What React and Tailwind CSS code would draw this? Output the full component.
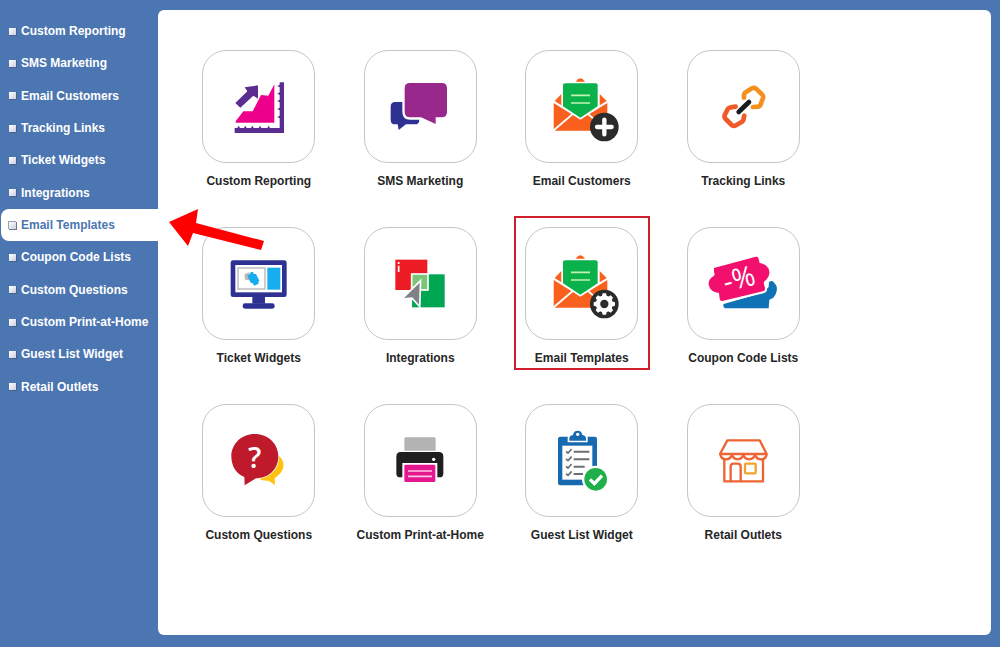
import clsx from "clsx";

function Icon({ box, children }) {
  return (
    <svg viewBox={box} className="h-full w-full" aria-hidden="true">
      {children}
    </svg>
  );
}

function ReportingIcon() {
  return (
    <Icon box="25 18 333 333">
      <path d="M123 229 L146 199 L174 199 L199 150 L221 152 L239 118 V233 H123 Z" fill="#ec008c" />
      <path d="M120 249 H128 l4 -7 l4 7 H148 l4 -7 l4 7 H169 l4 -7 l4 7 H192 l4 -7 l4 7 H218 l4 -7 l4 7 H255 V220 l-7 -4 l7 -4 V196 l-7 -4 l7 -4 V172 l-7 -4 l7 -4 V150 l-7 -4 l7 -4 V127 l-7 -4 l7 -4 V112 H268 V264 H120 Z" fill="#5c2d91" />
      <path d="M122 174 L158 139 L150 127 L190 121 L190 161 L176 152 L137 188 Z" fill="#5c2d91" />
    </Icon>
  );
}

function SmsIcon() {
  return (
    <Icon box="25 18 333 333">
      <path d="M116 171 H174 Q188 171 188 185 V224 Q188 238 174 238 H148 L126 255 L123 238 H116 Q102 238 102 224 V185 Q102 171 116 171 Z" fill="#2e3192" />
      <path d="M160 114 H255 Q271 114 271 130 V201 Q271 217 255 217 H237 V237 L193 217 H160 Q144 217 144 201 V130 Q144 114 160 114 Z" fill="#99288d" stroke="#fff" strokeWidth="14" paintOrder="stroke" strokeLinejoin="round" />
    </Icon>
  );
}

function EnvelopeIcon({ children }) {
  return (
    <Icon box="25 18 333 333">
      <g fill="#f95f1d">
        <path d="M174 110 Q188 90 202 110 Z" />
        <path d="M131 147 V181 L111 168 Z" />
        <path d="M246 147 V181 L267 168 Z" />
        <path d="M108 174 L161 207 L108 252 Z" />
        <path d="M269 174 L215 207 L269 252 Z" />
        <path d="M111 257 L166 210 L188 224 L210 210 L266 257 Z" />
      </g>
      <path d="M143 115 H234 Q240 115 240 121 V184 L188 218 L136 184 V121 Q136 115 143 115 Z" fill="#0bb14b" />
      <path d="M160 151 H217 M160 174 H217" stroke="#c5f2b0" strokeWidth="5" />
      <circle cx="260" cy="246" r="43" fill="#2b2b2b" />
      {children}
    </Icon>
  );
}

function EmailCustomersIcon() {
  return (
    <EnvelopeIcon>
      <path d="M260 224 V268 M238 246 H282" stroke="#fff" strokeWidth="13" strokeLinecap="round" />
    </EnvelopeIcon>
  );
}

function EmailTemplatesIcon() {
  return (
    <EnvelopeIcon>
      <circle cx="260" cy="246" r="19" fill="none" stroke="#fff" strokeWidth="13" />
      {[0, 45, 90, 135, 180, 225, 270, 315].map((angle) => (
        <path key={angle} d="M252 225 L255 214 H265 L268 225 Z" fill="#fff" transform={`rotate(${angle} 260 246)`} />
      ))}
    </EnvelopeIcon>
  );
}

function LinksIcon() {
  return (
    <Icon box="25 18 333 333">
      <g fill="none" strokeWidth="14" strokeLinecap="round" strokeLinejoin="round">
        <path d="M193 158 V151 Q193 144 199 141 L217 130 Q223 127 229 131 L246 147 Q252 152 250 159 L243 178 Q241 184 235 185 L220 186" stroke="#f4911e" />
        <path d="M168 185 L153 187 Q146 188 143 194 L135 211 Q133 217 138 222 L156 240 Q162 245 169 241 L186 231 Q192 227 192 220 L194 212" stroke="#f05a28" />
        <path d="M177 201 L208 171" stroke="#1b1b1b" />
      </g>
    </Icon>
  );
}

function TicketWidgetIcon() {
  return (
    <Icon box="25 25 333 333">
      <rect x="108" y="122" width="168" height="110" rx="7" fill="#2e3192" />
      <rect x="122" y="136" width="140" height="82" fill="#fff" />
      <rect x="130" y="145" width="81" height="63" fill="#fff" stroke="#b5b5b5" strokeWidth="4" />
      <rect x="218" y="144" width="39" height="66" fill="#18adee" />
      <path d="M149 164 L164 158 L168 182 L151 180 Z" fill="#b9b9b9" />
      <path d="M158 168 L166 163 L168 158 L174 156 L178 163 L184 163 L194 183 L191 188 L192 192 L179 198 L174 191 L168 189 Z" fill="#18adee" />
      <path d="M173 232 H211 V252 H173 Z" fill="#2e3192" />
      <rect x="144" y="251" width="96" height="16" rx="7" fill="#2e3192" />
    </Icon>
  );
}

function IntegrationsIcon() {
  return (
    <Icon box="510 25 333 333">
      <rect x="601" y="120" width="96" height="91" fill="#ed1c24" />
      <path d="M611 127 V133 M611 138 V157" stroke="#fff" strokeWidth="5" />
      <rect x="651" y="164" width="98" height="99" fill="#00a651" />
      <rect x="650" y="163" width="49" height="48" fill="#7cc576" stroke="#fff" strokeWidth="5" />
      <path d="M674 189 L627 235 L652 233 L672 255 Z" fill="#808285" stroke="#fff" strokeWidth="10" paintOrder="stroke" />
    </Icon>
  );
}

function CouponIcon() {
  return (
    <Icon box="25 25 333 333">
      <path d="M132 253 L250 219 L267 202 L268 187 Q278 179 284 190 Q294 199 291 214 Q287 235 269 240 L267 266 H136 Q128 260 132 253 Z" fill="#0e72b5" />
      <path d="M103 145 L228 111 Q236 110 237 118 L240 130 Q258 132 266 146 Q275 164 260 180 Q250 186 253 193 L256 206 Q257 213 250 215 L128 244 Q121 245 120 237 L118 220 Q94 218 88 199 Q83 180 102 169 Q107 166 103 157 Z" fill="#f20f6d" stroke="#fff" strokeWidth="12" strokeLinejoin="round" paintOrder="stroke" />
      <text x="179" y="206" transform="rotate(-14 180 180)" textAnchor="middle" fill="#fff" fontSize="84" fontWeight="500" fontFamily="'Open Sans', sans-serif">
        -%
      </text>
    </Icon>
  );
}

function QuestionsIcon() {
  return (
    <Icon box="25 21 333 333">
      <path d="M253 174 C272 191 274 219 240 240 L241 261 L222 248 Q206 250 194 243 C234 235 253 209 253 174 Z" fill="#ffc20e" />
      <path d="M180 108 C221 108 251 138 251 175 C251 216 220 241 184 241 L150 262 L149 237 C124 227 110 204 110 175 C110 138 140 108 180 108 Z" fill="#be1a2c" />
      <text x="180" y="209" textAnchor="middle" fill="#fff" fontSize="88" fontWeight="600" fontFamily="'Open Sans', sans-serif">
        ?
      </text>
    </Icon>
  );
}

function PrinterIcon() {
  return (
    <Icon box="510 21 333 333">
      <path d="M633 118 H717 Q722 118 722 123 V158 H628 V123 Q628 118 633 118 Z" fill="#b3b3b3" />
      <path d="M617 162 H732 Q745 162 745 176 V227 Q745 238 733 238 H616 Q604 238 604 227 V176 Q604 162 617 162 Z" fill="#1f1f1f" />
      <circle cx="716" cy="184" r="5" fill="#fff" />
      <rect x="622" y="195" width="105" height="62" fill="#fff" />
      <rect x="628" y="200" width="93" height="52" rx="4" fill="#e5178f" />
      <path d="M639 219 H711 M639 235 H711" stroke="#fbc3e3" strokeWidth="5" />
    </Icon>
  );
}

function GuestListIcon() {
  return (
    <Icon box="25 21 333 333">
      <rect x="121" y="116" width="117" height="146" rx="7" fill="#1769b0" />
      <rect x="134" y="143" width="90" height="102" fill="#fff" />
      <path d="M155 128 V119 Q157 112 166 111 Q168 98 180 98 Q192 98 194 111 Q203 112 205 119 V128 Z" fill="#1769b0" stroke="#fff" strokeWidth="10" paintOrder="stroke" />
      <circle cx="180" cy="109" r="5" fill="#fff" />
      <path d="M168 161 H215 M168 184 H215 M168 206 H201 M168 228 H197" stroke="#6d6e71" strokeWidth="6" />
      <path d="M145 160 l6 5 l11 -12 M145 183 l6 5 l11 -12 M145 205 l6 5 l11 -12 M145 227 l6 5 l11 -12" fill="none" stroke="#6d6e71" strokeWidth="5" />
      <circle cx="234" cy="244" r="41" fill="#fff" />
      <circle cx="234" cy="244" r="34" fill="#1fb04b" />
      <path d="M217 244 L230 257 L253 233" fill="none" stroke="#fff" strokeWidth="10" />
    </Icon>
  );
}

function RetailIcon() {
  return (
    <Icon box="510 21 333 333">
      <g fill="none" stroke="#ee6434" strokeWidth="7" strokeLinejoin="round">
        <path d="M628 127 H725 L746 168 H606 Z" />
        <path d="M607 168 Q609 184 624 184 Q638 184 642 169 Q645 184 659 184 Q673 184 676 169 Q679 184 693 184 Q708 184 711 169 Q715 184 729 184 Q744 184 746 168" />
        <path d="M619 184 V250 H735 V184" />
        <path d="M638 250 V206 Q638 197 647 197 H659 Q668 197 668 206 V250" />
      </g>
      <rect x="681" y="197" width="32" height="29" rx="3" fill="none" stroke="#f2a32c" strokeWidth="7" />
    </Icon>
  );
}

const sections = [
  { name: "Custom Reporting", art: ReportingIcon },
  { name: "SMS Marketing", art: SmsIcon },
  { name: "Email Customers", art: EmailCustomersIcon },
  { name: "Tracking Links", art: LinksIcon },
  { name: "Ticket Widgets", art: TicketWidgetIcon },
  { name: "Integrations", art: IntegrationsIcon },
  { name: "Email Templates", art: EmailTemplatesIcon, active: true },
  { name: "Coupon Code Lists", art: CouponIcon },
  { name: "Custom Questions", art: QuestionsIcon },
  { name: "Custom Print-at-Home", art: PrinterIcon },
  { name: "Guest List Widget", art: GuestListIcon },
  { name: "Retail Outlets", art: RetailIcon },
];

function Bullet({ active }) {
  return (
    <svg viewBox="0 0 9 9" className="h-[9px] w-[9px] shrink-0" aria-hidden="true">
      <defs>
        <linearGradient id="bullet" x1="0" y1="0" x2="1" y2="1">
          <stop offset="0" stopColor="#fff" />
          <stop offset="1" stopColor="#c9cfdf" />
        </linearGradient>
      </defs>
      <rect x="1" y="1" width="8" height="8" fill={active ? "#6f7686" : "#4a5f8c"} />
      {active && <rect width="8" height="8" fill="#9aa1b0" />}
      <rect x="1" y="1" width="7" height="7" fill="url(#bullet)" />
    </svg>
  );
}

function Sidebar() {
  return (
    <nav className="w-[158px] shrink-0 pt-[5px] pl-px">
      <ul className="grid h-[388px] auto-rows-fr">
        {sections.map(({ name, active }) => (
          <li key={name} className="flex">
            <a
              href="#"
              className={clsx(
                "flex flex-1 items-center gap-1 rounded-l-lg pl-[7px] whitespace-nowrap",
                active ? "bg-white text-[#4c76b1]" : "text-white"
              )}
            >
              <Bullet active={active} />
              {name}
            </a>
          </li>
        ))}
      </ul>
    </nav>
  );
}

function Tile({ name, art: Art, active }) {
  return (
    <a href="#" className="relative flex flex-col items-center gap-2.5">
      <div className="h-[113px] w-[113px] rounded-3xl border border-[#c6c6c6] bg-white">
        <Art />
      </div>
      <span className="leading-4 whitespace-nowrap">{name}</span>
      {active && (
        <span className="absolute inset-x-[13px] -top-[11px] -bottom-1 border-2 border-[#cf1f2f]" />
      )}
    </a>
  );
}

export default function App() {
  return (
    <div className="relative flex min-h-screen bg-[#4c76b1] pt-2.5 pr-[9px] pb-3 font-['Liberation_Sans',Arial,sans-serif] text-xs font-bold">
      <Sidebar />
      <main className="flex-1 rounded-md bg-white pt-10 pb-10 pl-5 text-[#262626]">
        <div className="grid max-w-[646px] grid-cols-4 gap-y-[38px]">
          {sections.map((section) => (
            <Tile key={section.name} {...section} />
          ))}
        </div>
      </main>

      {/* Pointer to the selected section */}
      <svg viewBox="0 0 96 44" className="pointer-events-none absolute top-52 left-[169px] h-11 w-24" aria-hidden="true">
        <path d="M0 14 L29 1 L27 15 L95 33 L92 42 L24 25 L19 38 Z" fill="#fe0000" />
      </svg>
    </div>
  );
}
